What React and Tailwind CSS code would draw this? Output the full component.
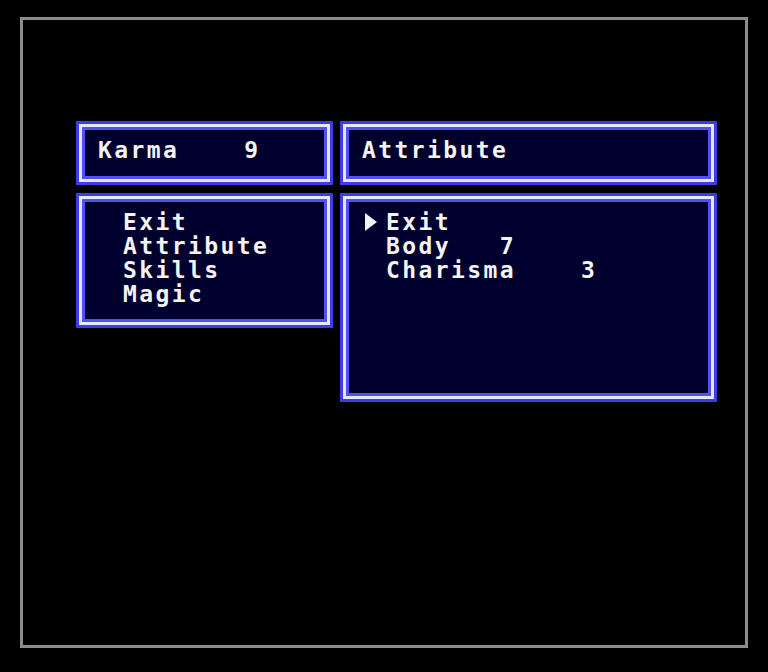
import React from "react";

const font = { fontFamily: '"DejaVu Sans Mono", "Liberation Mono", monospace' };

function Win({ className = "", children }) {
  return (
    <div className={`bg-[#3c3ce8] p-[3px] ${className}`}>
      <div className="h-full bg-[#e6e6ff] p-[3px]">
        <div className="h-full bg-[#5050f4] p-[3px]">
          <div className="h-full bg-[#00002e]">{children}</div>
        </div>
      </div>
    </div>
  );
}

function Arrow() {
  return (
    <svg width="12" height="18" viewBox="0 0 12 18" className="block">
      <polygon points="0,0 12,9 0,18" fill="#f4f4f4" />
    </svg>
  );
}

export default function App() {
  return (
    <div className="w-[768px] h-[672px] bg-black overflow-hidden">
      <div className="ml-[20px] mt-[17px] w-[728px] h-[631px] border-[3px] border-[#8c8c8c] pl-[53px] pt-[101px]">
        <div
          className="flex gap-[7px] text-[23px] font-bold leading-[24px] tracking-[2.4px] text-[#f4f4f4] whitespace-pre"
          style={font}
        >
          <div className="flex w-[257px] flex-col gap-[8px]">
            <Win className="h-[64px]">
              <div className="pl-[13px] pt-[8px]">Karma    9</div>
            </Win>
            <Win className="h-[135px]">
              <div className="pl-[38px] pt-[8px]">
                <div>Exit</div>
                <div>Attribute</div>
                <div>Skills</div>
                <div>Magic</div>
              </div>
            </Win>
          </div>
          <div className="flex w-[377px] flex-col gap-[8px]">
            <Win className="h-[64px]">
              <div className="pl-[13px] pt-[8px]">Attribute</div>
            </Win>
            <Win className="h-[209px]">
              <div className="pl-[16px] pt-[8px]">
                <div className="flex items-center">
                  <div className="w-[21px] shrink-0">
                    <Arrow />
                  </div>
                  <span>Exit</span>
                </div>
                <div className="pl-[21px]">Body   7</div>
                <div className="pl-[21px]">Charisma    3</div>
              </div>
            </Win>
          </div>
        </div>
      </div>
    </div>
  );
}
